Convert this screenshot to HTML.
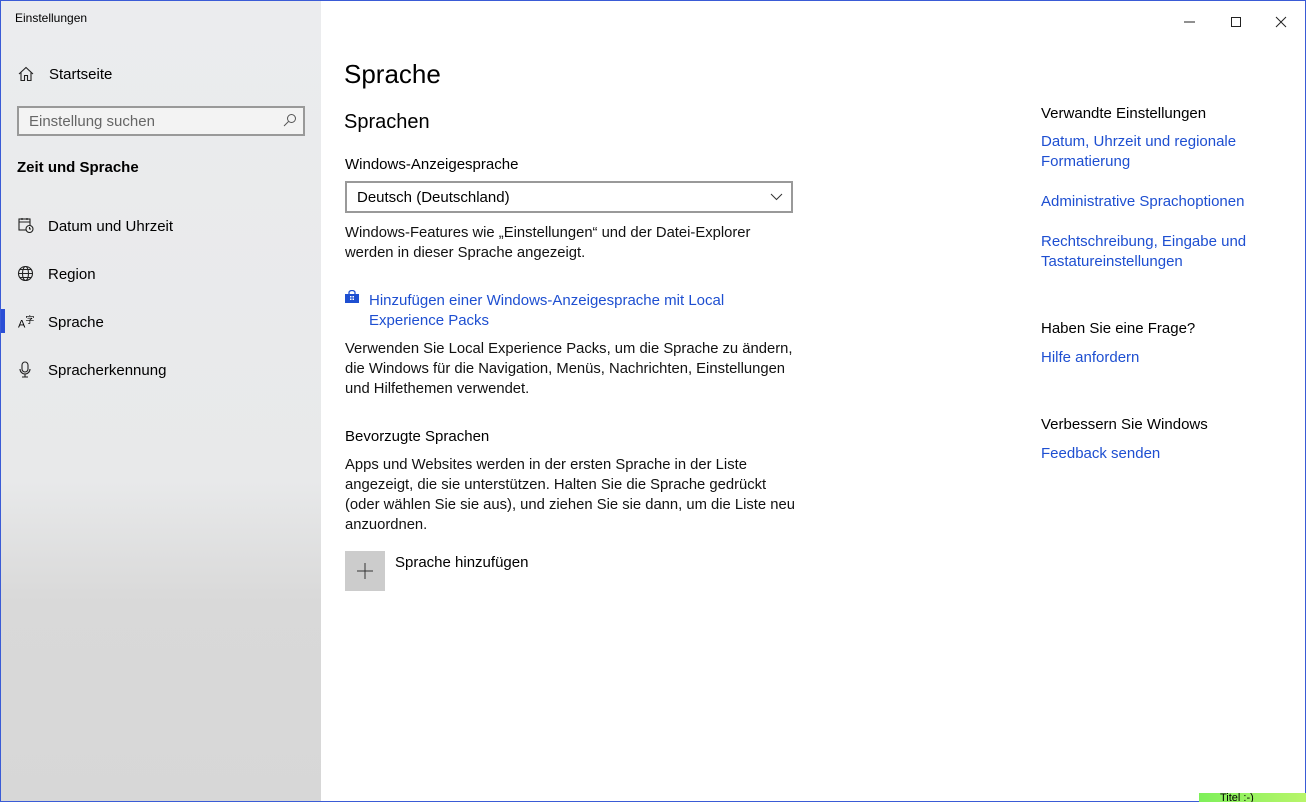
<!DOCTYPE html>
<html><head><meta charset="utf-8"><style>
*{margin:0;padding:0;box-sizing:border-box}
body{width:1306px;height:802px;position:relative;overflow:hidden;font-family:"Liberation Sans",sans-serif;color:#000;background:#fff}
.frame{position:absolute;inset:0;border:1px solid #3a5bd6;pointer-events:none;z-index:9}
.side{position:absolute;left:0;top:0;width:321px;height:802px;background:linear-gradient(#ebecee 0%,#e8e9ea 60%,#d9d9d9 75%,#d7d7d7 100%)}
.a{position:absolute;white-space:nowrap}
.t{font-size:15px;margin-top:1px}
.link{color:#1e4fd1;font-size:15px;line-height:20px;position:absolute;margin-top:1px}
.p{font-size:14.8px;line-height:20px;position:absolute;color:#111;margin-top:1px}
</style></head><body>
<div class="side"></div>
<div class="a" style="left:15px;top:11px;font-size:12px">Einstellungen</div>
<svg class="a" style="left:18px;top:66px" width="16" height="16" viewBox="0 0 16 16" fill="none" stroke="#222" stroke-width="1.1"><path d="M1 8L8 1.5 15 8M3 6.5V14.5H6.5V9.5H9.5V14.5H13V6.5"/></svg>
<div class="a t" style="left:49px;top:65px">Startseite</div>
<div class="a" style="left:17px;top:106px;width:288px;height:30px;border:2px solid #999;background:#f3f3f3"></div>
<div class="a t" style="left:29px;top:112px;color:#666">Einstellung suchen</div>
<svg class="a" style="left:283px;top:113px" width="14" height="14" viewBox="0 0 14 14" fill="none" stroke="#555" stroke-width="1"><circle cx="8.5" cy="5.5" r="4"/><path d="M5.5 8.5L1 13"/></svg>
<div class="a" style="left:17px;top:159px;font-size:15px;font-weight:bold">Zeit und Sprache</div>
<svg class="a" style="left:18px;top:217px" width="16" height="16" viewBox="0 0 16 16" fill="none" stroke="#222" stroke-width="1.1"><rect x="1" y="2" width="11" height="11"/><path d="M1 5H12M4 1V3M9 1V3"/><circle cx="11.5" cy="12" r="3.5" fill="#eee"/><path d="M11.5 10V12H13"/></svg>
<div class="a t" style="left:48px;top:217px">Datum und Uhrzeit</div>
<svg class="a" style="left:17px;top:265px" width="17" height="17" viewBox="0 0 17 17" fill="none" stroke="#222" stroke-width="1.1"><circle cx="8.5" cy="8.5" r="7"/><ellipse cx="8.5" cy="8.5" rx="3" ry="7"/><path d="M1.5 8.5H15.5M3 4.5H14M3 12.5H14"/></svg>
<div class="a t" style="left:48px;top:265px">Region</div>
<div class="a" style="left:1px;top:309px;width:4px;height:24px;background:#2b4fd6"></div>
<div class="a" style="left:18px;top:313px;font-size:11px">A<sup style="font-size:9px;font-family:'Noto Sans CJK SC',sans-serif">字</sup></div>
<div class="a t" style="left:48px;top:313px">Sprache</div>
<svg class="a" style="left:19px;top:361px" width="12" height="17" viewBox="0 0 12 17" fill="none" stroke="#222" stroke-width="1.1"><rect x="3" y="1" width="6" height="10" rx="3"/><path d="M1 8a5 5 0 0 0 10 0M6 13V16M3 16H9"/></svg>
<div class="a t" style="left:48px;top:361px">Spracherkennung</div>

<svg class="a" style="left:1184px;top:16px" width="110" height="12" viewBox="0 0 110 12" fill="none" stroke="#222" stroke-width="1"><path d="M0 6H11"/><rect x="47.5" y="1.5" width="9" height="9"/><path d="M92 1L102 11M102 1L92 11"/></svg>

<div class="a" style="left:344px;top:59px;font-size:26px">Sprache</div>
<div class="a" style="left:344px;top:111px;font-size:20px">Sprachen</div>
<div class="a t" style="left:345px;top:155px">Windows-Anzeigesprache</div>
<div class="a" style="left:345px;top:181px;width:448px;height:32px;border:2px solid #999;background:#fff"></div>
<div class="a t" style="left:357px;top:188px">Deutsch (Deutschland)</div>
<svg class="a" style="left:770px;top:193px" width="13" height="8" viewBox="0 0 13 8" fill="none" stroke="#333" stroke-width="1"><path d="M1 1L6.5 6.5 12 1"/></svg>
<div class="p" style="left:345px;top:222px">Windows-Features wie „Einstellungen“ und der Datei-Explorer<br>werden in dieser Sprache angezeigt.</div>
<svg class="a" style="left:345px;top:290px" width="14" height="13" viewBox="0 0 14 13"><path d="M4 4V2.5a3 2 0 0 1 6 0V4" fill="none" stroke="#1e4fd1" stroke-width="1.3"/><rect x="0" y="4" width="14" height="9" fill="#1e4fd1"/><path d="M5 6H6.5V7.5H5ZM7.5 6H9V7.5H7.5ZM5 8.5H6.5V10H5ZM7.5 8.5H9V10H7.5Z" fill="#fff"/></svg>
<div class="link" style="left:369px;top:290px">Hinzufügen einer Windows-Anzeigesprache mit Local<br>Experience Packs</div>
<div class="p" style="left:345px;top:338px">Verwenden Sie Local Experience Packs, um die Sprache zu ändern,<br>die Windows für die Navigation, Menüs, Nachrichten, Einstellungen<br>und Hilfethemen verwendet.</div>
<div class="a t" style="left:345px;top:427px">Bevorzugte Sprachen</div>
<div class="p" style="left:345px;top:454px">Apps und Websites werden in der ersten Sprache in der Liste<br>angezeigt, die sie unterstützen. Halten Sie die Sprache gedrückt<br>(oder wählen Sie sie aus), und ziehen Sie sie dann, um die Liste neu<br>anzuordnen.</div>
<div class="a" style="left:345px;top:551px;width:40px;height:40px;background:#ccc"></div>
<svg class="a" style="left:356px;top:562px" width="18" height="18" viewBox="0 0 18 18" stroke="#333" stroke-width="1"><path d="M9 1V17M1 9H17"/></svg>
<div class="a t" style="left:395px;top:553px">Sprache hinzufügen</div>

<div class="a t" style="left:1041px;top:104px">Verwandte Einstellungen</div>
<div class="link" style="left:1041px;top:131px">Datum, Uhrzeit und regionale<br>Formatierung</div>
<div class="link" style="left:1041px;top:191px">Administrative Sprachoptionen</div>
<div class="link" style="left:1041px;top:231px">Rechtschreibung, Eingabe und<br>Tastatureinstellungen</div>
<div class="a t" style="left:1041px;top:319px">Haben Sie eine Frage?</div>
<div class="link" style="left:1041px;top:347px">Hilfe anfordern</div>
<div class="a t" style="left:1041px;top:415px">Verbessern Sie Windows</div>
<div class="link" style="left:1041px;top:443px">Feedback senden</div>

<div class="a" style="left:1199px;top:793px;width:107px;height:9px;background:linear-gradient(90deg,#7ef05a,#b8f56a);overflow:hidden;z-index:10"><span style="position:absolute;left:21px;top:-1px;font-size:11px">Titel :-)</span></div>
<div class="frame"></div>
</body></html>
